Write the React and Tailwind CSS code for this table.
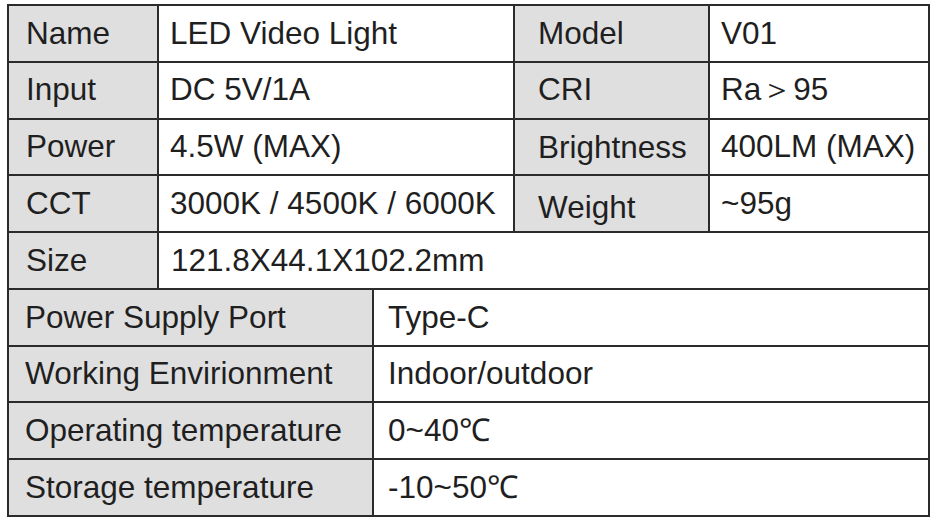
const topRows = [
    ['Name', 'LED Video Light', 'Model', 'V01'],
    ['Input', 'DC 5V/1A', 'CRI', 'Ra\uFF1E95'],
    ['Power', '4.5W (MAX)', 'Brightness', '400LM (MAX)'],
    ['CCT', '3000K / 4500K / 6000K', 'Weight', '~95g'],
];

const wideRows = [
    ['Power Supply Port', 'Type-C'],
    ['Working Envirionment', 'Indoor/outdoor'],
    ['Operating temperature', '0~40\u2103'],
    ['Storage temperature', '-10~50\u2103'],
];

const label = 'flex items-center bg-[#dfdfdf]';
const value = 'flex items-center bg-white';

export default function App() {
    return (
        <div className="w-[936px] h-[526px] bg-white pt-[4px] pl-[7px]">
            <div
                className="w-[923px] h-[513px] border-2 border-[#2b2b2b] flex flex-col text-[31.5px] leading-none text-[#1f1f1f]"
                style={{ fontFamily: '"Liberation Sans", Arial, sans-serif' }}
            >
                {topRows.map((row, i) => (
                    <div key={row[0]} className={`flex-1 flex ${i > 0 ? 'border-t-2 border-[#2b2b2b]' : ''}`}>
                        <div className={`${label} w-[148px] pl-[17px]`}>{row[0]}</div>
                        <div className={`${value} w-[356px] border-l-2 border-[#2b2b2b] pl-[11px]`}>{row[1]}</div>
                        <div
                            className={`${label} w-[195px] border-l-2 border-[#2b2b2b] pl-[23px] ${i === 3 ? 'pt-[8px]' : i === 2 ? 'pt-[2px]' : ''}`}
                        >
                            {row[2]}
                        </div>
                        <div className={`${value} flex-1 border-l-2 border-[#2b2b2b] pl-[11px]`}>{row[3]}</div>
                    </div>
                ))}

                {/* Size */}
                <div className="flex-1 flex border-t-2 border-[#2b2b2b]">
                    <div className={`${label} w-[148px] pl-[17px]`}>Size</div>
                    <div className={`${value} flex-1 border-l-2 border-[#2b2b2b] pl-[12px]`}>121.8X44.1X102.2mm</div>
                </div>

                {wideRows.map((row) => (
                    <div key={row[0]} className="flex-1 flex border-t-2 border-[#2b2b2b]">
                        <div className={`${label} w-[363px] pl-[16px]`}>{row[0]}</div>
                        <div className={`${value} flex-1 border-l-2 border-[#2b2b2b] pl-[14px]`}>{row[1]}</div>
                    </div>
                ))}
            </div>
        </div>
    );
}
